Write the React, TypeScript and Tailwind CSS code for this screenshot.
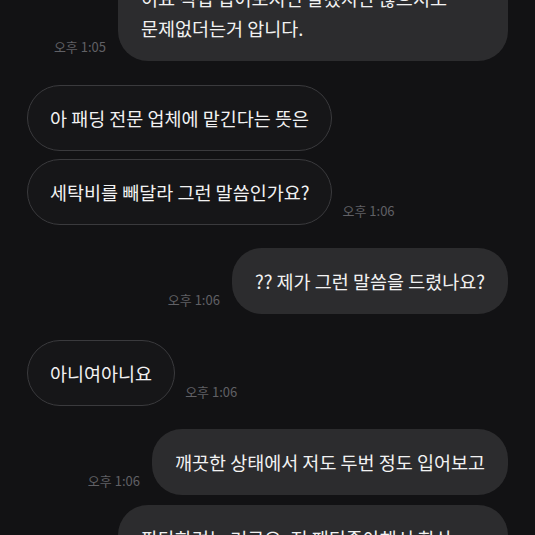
const Time = ({ t }: { t: string }) => (
  <span className="mb-[6px] shrink-0 text-[13px] leading-[16px] text-[#606065]">{t}</span>
);

const Sent = ({ children, time, className = "" }: { children: React.ReactNode; time?: string; className?: string }) => (
  <div className={`flex items-end justify-end gap-[12px] ${className}`}>
    {time && <Time t={time} />}
    {children}
  </div>
);

const Received = ({ children, time, className = "" }: { children: React.ReactNode; time?: string; className?: string }) => (
  <div className={`flex items-end gap-[10px] ${className}`}>
    {children}
    {time && <Time t={time} />}
  </div>
);

const SentBubble = ({ children, wide }: { children: React.ReactNode; wide?: boolean }) => (
  <div
    className={`rounded-[30px] bg-[#2c2c2e] px-[23px] py-[18px] text-[18.5px] leading-[30px] text-[#f2f2f2] ${
      wide ? "w-[390px]" : "whitespace-nowrap"
    }`}
  >
    {children}
  </div>
);

const RecvBubble = ({ children }: { children: React.ReactNode }) => (
  <div className="whitespace-nowrap rounded-[33px] border border-[#3a3a3d] bg-[#161618] px-[22px] py-[17px] text-[18.5px] leading-[30px] text-[#f2f2f2]">
    {children}
  </div>
);

export default function App() {
  return (
    <div className="h-[535px] w-[535px] overflow-hidden bg-[#121214] font-['Noto_Sans_CJK_KR','Noto_Sans',sans-serif]">
      <div className="mt-[-35px] flex flex-col px-[27px]">
        <Sent time="오후 1:05">
          <SentBubble wide>
            이요 직접 입어보시면 알겠지만 않으셔도
            <br />
            문제없더는거 압니다.
          </SentBubble>
        </Sent>

        <Received className="mt-[24px]">
          <RecvBubble>아 패딩 전문 업체에 맡긴다는 뜻은</RecvBubble>
        </Received>
        <Received className="mt-[8px]" time="오후 1:06">
          <RecvBubble>세탁비를 빼달라 그런 말씀인가요?</RecvBubble>
        </Received>

        <Sent className="mt-[23px]" time="오후 1:06">
          <SentBubble>?? 제가 그런 말씀을 드렸나요?</SentBubble>
        </Sent>

        <Received className="mt-[26px]" time="오후 1:06">
          <RecvBubble>아니여아니요</RecvBubble>
        </Received>

        <Sent className="mt-[23px]" time="오후 1:06">
          <SentBubble>깨끗한 상태에서 저도 두번 정도 입어보고</SentBubble>
        </Sent>

        <Sent className="mt-[10px]">
          <SentBubble wide>
            판단하려는 거구요. 저 패딩좋아해서 항상
            <br />
            세탁소에 맡기거든요.
          </SentBubble>
        </Sent>
      </div>
    </div>
  );
}
